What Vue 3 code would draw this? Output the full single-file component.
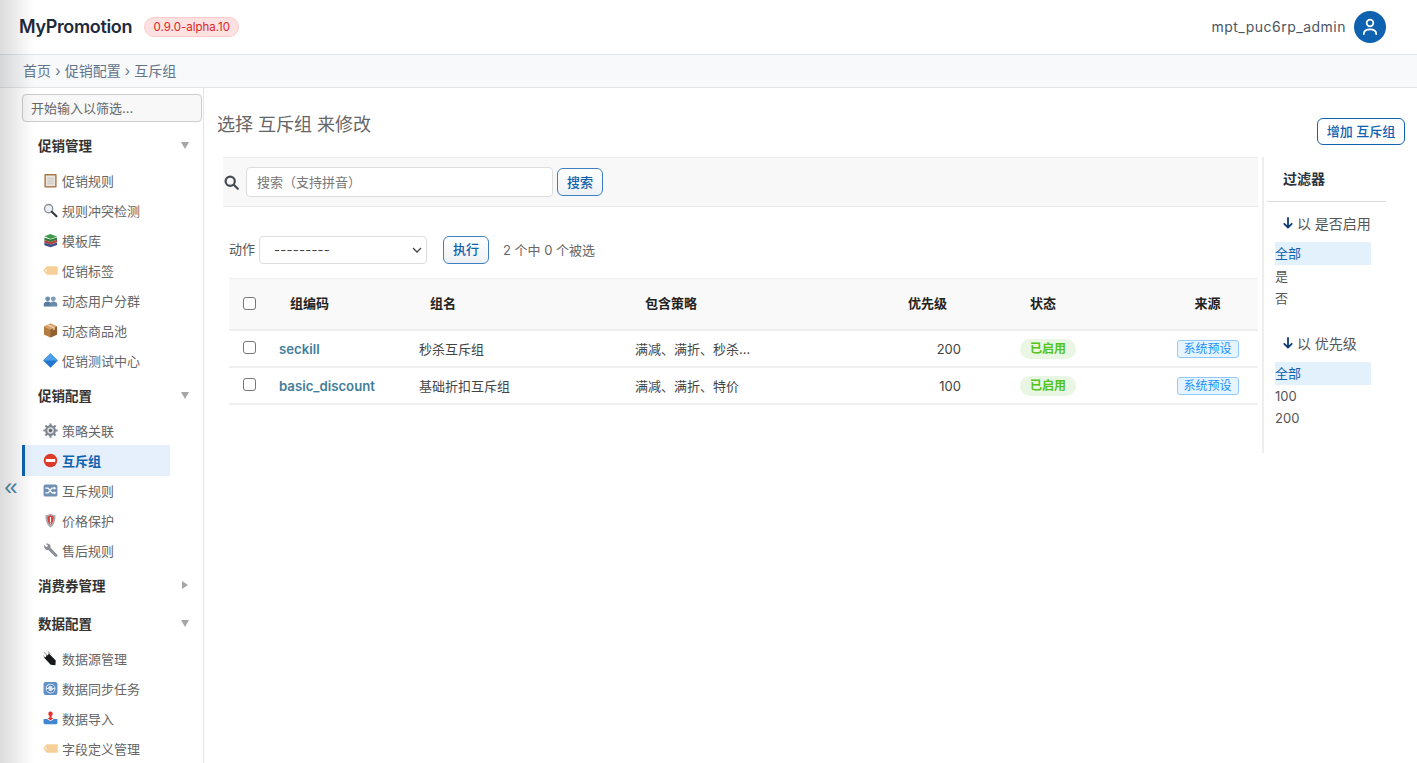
<script setup>
const icons = {
  clipboard: '<rect x="1.500" y="1" width="13" height="14.500" rx="1" fill="#a9743f"/><rect x="3" y="2.600" width="10" height="11.400" fill="#e9e6df"/><path d="M4.600 5.500h6.800M4.600 7.500h6.800M4.600 9.500h6.800M4.600 11.500h6.800" stroke="#bdb9b0" stroke-width=".7"/>',
  search: '<circle cx="6" cy="6" r="4.400" fill="#e8f0f6" stroke="#8b8f94" stroke-width="1.400"/><path d="M9.400 9.400l5 4.800" stroke="#33363a" stroke-width="2.200" stroke-linecap="round"/>',
  books: '<path d="M1.500 3.500L8 1l7 3-7 2.500z" fill="#3f9b4a"/><path d="M1.500 5L8 7l7-2.300V7.200L8 9.500 1.500 7.500z" fill="#2d7a3a"/><path d="M1.500 7.500l6.500 2 7-2.300v2.600L8 12.200 1.500 10z" fill="#b2413c"/><path d="M1.500 10.200L8 12.300l7-2.300v2.700L8 15.200l-6.500-2.200z" fill="#3f4f85"/>',
  tag: '<path d="M4 3.500h10.700a1 1 0 0 1 1 1v7a1 1 0 0 1-1 1H4L.3 8z" fill="#f6cf98"/><circle cx="3.400" cy="8" r="1" fill="#fff3e0"/>',
  users: '<circle cx="5" cy="6.200" r="2.600" fill="#6f8fb0"/><circle cx="11" cy="6.200" r="2.600" fill="#7f9cba"/><path d="M.8 14.500v-2.700C.8 10 3 9 5 9s3.600 1 3.600 2.800v2.700z" fill="#56799c"/><path d="M7.400 14.500v-2.700C7.400 10 9 9 11 9s4.200 1 4.200 2.800v2.700z" fill="#6a8aac"/>',
  box: '<path d="M8 .6l7 3.200v8.400L8 15.500 1 12.200V3.800z" fill="#b27c43"/><path d="M8 7.200L1 3.800 8 .6l7 3.200z" fill="#d6a56c"/><path d="M8 7.200v8.300l7-3.300V3.800z" fill="#8f5f2f"/><path d="M4.500 2.300L11 5.600v2.200l1.500-.7V4.900L6 1.600z" fill="#ecd4ae"/>',
  diamond: '<path d="M8 .2L15.800 8 8 15.800.2 8z" fill="#2276d2"/><path d="M8 .2L15.800 8H.2z" fill="#4f9fe8"/>',
  gear: '<circle cx="8" cy="8" r="5.800" fill="#7f8790"/><path d="M8 .4v15.200M.4 8h15.200M2.600 2.600l10.800 10.800M13.400 2.600L2.600 13.400" stroke="#7f8790" stroke-width="2.200"/><circle cx="8" cy="8" r="3.500" fill="#d6d9dd"/><circle cx="8" cy="8" r="1.800" fill="#5f666e"/>',
  noentry: '<circle cx="8" cy="8" r="7.200" fill="#dd3b2a"/><rect x="3" y="6.400" width="10" height="3.200" rx=".4" fill="#fff"/>',
  shuffle: '<rect x=".6" y="1.600" width="14.800" height="12.800" rx="2" fill="#6f8fb3"/><path d="M2.500 5.500h3l4 5H12M2.500 10.500h3l4-5H12" fill="none" stroke="#fff" stroke-width="1.300"/><path d="M11.500 3.700L14.300 5.500l-2.800 1.800zM11.500 8.700L14.300 10.500l-2.800 1.800z" fill="#fff"/>',
  shield: '<path d="M8 .6c1.500 1 3.800 1.700 5.400 1.700 0 5.200-1 10-5.400 13.300-4.400-3.300-5.400-8.100-5.400-13.300C4.200 2.300 6.500 1.600 8 .6z" fill="#a9adb3"/><path d="M8 2.400c1 .6 2.200 1 3.400 1.200 0 3.800-1 7-3.400 9.500-2.400-2.500-3.400-5.700-3.400-9.500C5.800 3.400 7 3 8 2.400z" fill="#d9453a"/><path d="M8 4.200v5.800M8 11v1" stroke="#fff" stroke-width="1.100"/>',
  wrench: '<path d="M1.400 2.200L3.800 4.600 5.400 3 3 .7c2.200-.8 4.600.4 5 2.500.1.600.1 1.200 0 1.800l7 7.200c.6.600.6 1.700 0 2.300-.6.600-1.700.6-2.300 0L5.800 7.400c-.6.100-1.200.1-1.800 0C1.900 7 .6 4.400 1.400 2.200z" fill="#8a8f95"/>',
  plug: '<path d="M1 1.200l3.500 3.500M5 .4L8 3.400M.4 5l3 3" stroke="#a8a8a8" stroke-width="1.100"/><path d="M6 2.400l7.600 7.800-.4 5-5-.6L1 6.800l2.200-.5.400-1.600 1.900-.5z" fill="#17181a"/>',
  sync: '<rect x=".6" y="1" width="14.800" height="14" rx="2.400" fill="#5f8fc4"/><circle cx="8" cy="8" r="5.200" fill="#dfe9f4"/><path d="M4.500 7.200A3.600 3.600 0 0 1 11 6.100M11.500 8.800A3.600 3.600 0 0 1 5 9.900" fill="none" stroke="#4177b3" stroke-width="1.300"/><path d="M12 4.400v2.800H9.300zM4 11.600V8.800h2.700z" fill="#4177b3"/>',
  inbox: '<circle cx="8" cy="3" r="2.400" fill="#e5322d"/><path d="M6.800 4.500h2.400v3h2L8 10.200 4.800 7.500h2z" fill="#e5322d"/><path d="M.6 8.500h3.900L8 11l3.500-2.500h3.900V12.500a1.500 1.500 0 0 1-1.500 1.500H2.100a1.500 1.500 0 0 1-1.500-1.500z" fill="#3f87d2"/>'
}
const groups = [
  { title: '促销管理', open: true, items: [['clipboard', '促销规则'], ['search', '规则冲突检测'], ['books', '模板库'], ['tag', '促销标签'], ['users', '动态用户分群'], ['box', '动态商品池'], ['diamond', '促销测试中心']] },
  { title: '促销配置', open: true, items: [['gear', '策略关联'], ['noentry', '互斥组', true], ['shuffle', '互斥规则'], ['shield', '价格保护'], ['wrench', '售后规则']] },
  { title: '消费券管理', open: false, items: [] },
  { title: '数据配置', open: true, items: [['plug', '数据源管理'], ['sync', '数据同步任务'], ['inbox', '数据导入'], ['tag', '字段定义管理']] }
]
const rows = [
  { code: 'seckill', name: '秒杀互斥组', strategy: '满减、满折、秒杀...', priority: 200 },
  { code: 'basic_discount', name: '基础折扣互斥组', strategy: '满减、满折、特价', priority: 100 }
]
const filters = [
  { title: '以 是否启用', options: ['全部', '是', '否'] },
  { title: '以 优先级', options: ['全部', '100', '200'] }
]
</script>

<template>
  <div class="page">
    <header class="topbar">
      <div class="brand">
        <span class="logo">MyPromotion</span>
        <span class="version">0.9.0-alpha.10</span>
      </div>
      <div class="user">
        <span class="username">mpt_puc6rp_admin</span>
        <span class="avatar">
          <svg width="20" height="20" viewBox="0 0 20 20" fill="none" stroke="#fff" stroke-width="1.800" stroke-linecap="round">
            <circle cx="10" cy="6" r="3.300" />
            <path d="M3.800 17c0-3 2.400-4.600 6.200-4.600s6.200 1.600 6.200 4.600" />
          </svg>
        </span>
      </div>
    </header>
    <nav class="crumbs">首页 › 促销配置 › 互斥组</nav>

    <div class="main">
      <aside class="sidebar">
        <input class="nav-filter" placeholder="开始输入以筛选..." />
        <section v-for="g in groups" :key="g.title" class="group">
          <div class="group-head">
            <span>{{ g.title }}</span>
            <i :class="g.open ? 'caret-down' : 'caret-right'"></i>
          </div>
          <ul v-if="g.items.length" class="items">
            <li v-for="it in g.items" :key="it[1]" :class="{ active: it[2] }">
              <svg class="emoji" viewBox="0 0 16 16" v-html="icons[it[0]]"></svg>
              <span>{{ it[1] }}</span>
            </li>
          </ul>
        </section>
      </aside>

      <main class="content">
        <div class="title-row">
          <h1>选择 互斥组 来修改</h1>
          <button class="btn add">增加 互斥组</button>
        </div>
        <div class="body-row">
          <div class="changelist">
            <div class="searchbar">
              <svg class="search-icon" width="15" height="15" viewBox="0 0 15 15" fill="none" stroke="#444b52" stroke-width="2.200">
                <circle cx="6.200" cy="6.200" r="4.600" />
                <path d="M9.800 9.800l4 4" stroke-linecap="round" />
              </svg>
              <input class="search-input" placeholder="搜索（支持拼音）" />
              <button class="btn small">搜索</button>
            </div>
            <div class="actions">
              <span class="act-label">动作</span>
              <select class="act-select"><option>---------</option></select>
              <button class="btn small exec">执行</button>
              <span class="counter">2 个中 0 个被选</span>
            </div>
            <table class="grid">
              <thead>
                <tr>
                  <th class="c-check"><input type="checkbox" class="cb" /></th>
                  <th class="c-code">组编码</th>
                  <th class="c-name">组名</th>
                  <th class="c-strategy">包含策略</th>
                  <th class="c-priority">优先级</th>
                  <th class="c-status">状态</th>
                  <th class="c-source">来源</th>
                </tr>
              </thead>
              <tbody>
                <tr v-for="r in rows" :key="r.code">
                  <td class="c-check"><input type="checkbox" class="cb" /></td>
                  <td class="c-code"><a class="link">{{ r.code }}</a></td>
                  <td class="c-name">{{ r.name }}</td>
                  <td class="c-strategy">{{ r.strategy }}</td>
                  <td class="c-priority">{{ r.priority }}</td>
                  <td class="c-status"><span class="pill">已启用</span></td>
                  <td class="c-source"><span class="tag">系统预设</span></td>
                </tr>
              </tbody>
            </table>
          </div>
          <aside class="filter">
            <h2>过滤器</h2>
            <section v-for="f in filters" :key="f.title" class="filter-sec">
              <h3>
                <svg width="10" height="12" viewBox="0 0 10 12" fill="none" stroke="#0f3d73" stroke-width="1.800" stroke-linecap="round" stroke-linejoin="round">
                  <path d="M5 1v9.500M1.300 6.800L5 10.500l3.700-3.700" />
                </svg>
                {{ f.title }}
              </h3>
              <ul>
                <li v-for="(o, i) in f.options" :key="o" :class="{ sel: i === 0 }">{{ o }}</li>
              </ul>
            </section>
          </aside>
        </div>
      </main>
    </div>

    <div class="edge-shade"></div>
    <button class="collapse">«</button>
  </div>
</template>

<style>
html, body { margin: 0; background: #fff; }
</style>

<style scoped>
* { box-sizing: border-box; }
.page {
  position: relative;
  height: 763px;
  overflow: hidden;
  background: #fff;
  font-family: Inter, "Noto Sans CJK SC", sans-serif;
  font-size: 13px;
  color: #444;
}
.topbar {
  height: 55px;
  border-bottom: 1px solid #e2e5e9;
  display: flex;
  align-items: center;
  justify-content: space-between;
  padding: 0 31px 1px 19px;
}
.brand { display: flex; align-items: center; gap: 12px; }
.logo { font-size: 18px; font-weight: 600; color: #1e293b; letter-spacing: -0.35px; }
.version {
  height: 20px;
  line-height: 18px;
  padding: 0 8.500px;
  font-size: 11.500px;
  color: #dc2626;
  background: #fee2e2;
  border: 1px solid #fecaca;
  border-radius: 10px;
}
.user { display: flex; align-items: center; gap: 8px; }
.username { font-size: 14px; color: #4b5563; letter-spacing: .5px; }
.avatar {
  width: 32px;
  height: 32px;
  border-radius: 50%;
  background: #0f62b0;
  display: flex;
  align-items: center;
  justify-content: center;
}
.crumbs {
  height: 33px;
  line-height: 32px;
  padding-left: 23px;
  font-size: 14px;
  word-spacing: .2px;
  color: #64748b;
  background: #f8f9fb;
  border-bottom: 1px solid #e2e5e9;
}
.main { display: flex; height: 675px; }
.sidebar {
  width: 203.500px;
  flex: none;
  border-right: 1px solid #e4e6e8;
  padding: 6px 0 0 22px;
  overflow: hidden;
}
.nav-filter {
  display: block;
  width: 180px;
  height: 28px;
  padding: 0 8px;
  font: inherit;
  color: #666;
  background: #f8f8f8;
  border: 1px solid #ccc;
  border-radius: 4px;
}
.nav-filter::placeholder { color: #666; }
.group { width: 180px; }
.group-head {
  display: flex;
  align-items: center;
  justify-content: space-between;
  height: 38px;
  padding: 0 13px 0 16px;
  font-size: 13.500px;
  font-weight: 600;
  color: #333;
}
.nav-filter + .group .group-head { margin-top: 4px; }
.caret-down { border-left: 4px solid transparent; border-right: 4px solid transparent; border-top: 7px solid #a6a6a6; }
.caret-right { border-top: 4px solid transparent; border-bottom: 4px solid transparent; border-left: 6px solid #a6a6a6; margin-right: 1px; }
.items { list-style: none; margin: 0; padding: 0 0 2px; width: 148px; }
.items li {
  height: 30px;
  display: flex;
  align-items: center;
  gap: 4px;
  padding: 2px 0 0 21px;
  color: #666;
}
.items li.active {
  height: 31px;
  margin: 1px 0 -2px;
  padding: 0 0 1px 18px;
  background: #e6f0fc;
  border-left: 3px solid #0f62b0;
  color: #0f62b0;
  font-weight: 600;
}
.emoji { width: 15px; height: 15px; flex: none; }
.content { flex: 1; min-width: 0; padding-left: 13.500px; }
.title-row {
  display: flex;
  justify-content: space-between;
  height: 69px;
  padding: 23px 12px 0 0;
}
h1 { margin: 0; font-size: 18px; font-weight: 400; line-height: 28px; color: #666; }
.btn {
  font: inherit;
  font-weight: 500;
  color: #0f62b0;
  background: linear-gradient(#fff, #eef1f4);
  border: 1px solid #3d7fc0;
  border-radius: 6px;
  cursor: pointer;
  padding: 0 0 2px;
}
.add { width: 88px; height: 27px; margin-top: 7px; background: #fff; border-color: #0f62b0; }
.small { width: 46px; height: 28px; }
.body-row { display: flex; gap: 4px; padding-left: 6px; }
.changelist { width: 1035px; flex: none; }
.searchbar {
  height: 50px;
  background: #f8f8f8;
  border-top: 1px solid #eee;
  border-bottom: 1px solid #e8e8e8;
  display: flex;
  align-items: center;
}
.search-icon { margin-left: 1px; flex: none; }
.search-input {
  width: 307px;
  height: 30px;
  margin: 0 4px 0 7px;
  padding: 0 10px;
  font: inherit;
  background: #fff;
  border: 1px solid #ddd;
  border-radius: 4px;
}
.search-input::placeholder { color: #777; }
.actions {
  display: flex;
  align-items: center;
  height: 72px;
  margin-left: 6px;
  padding-top: 14px;
  border-bottom: 1px solid #eee;
}
.act-label { width: 30px; color: #555; margin-top: -3px; }
.act-select {
  appearance: none;
  width: 168px;
  height: 28px;
  padding: 0 0 0 14px;
  font: inherit;
  letter-spacing: .25px;
  color: #444;
  border: 1px solid #ddd;
  border-radius: 4px;
  background: #fff url("data:image/svg+xml,%3Csvg xmlns='http://www.w3.org/2000/svg' width='10' height='6'%3E%3Cpath d='M1 1l4 4 4-4' fill='none' stroke='%23444' stroke-width='1.300'/%3E%3C/svg%3E") no-repeat right 4px center;
}
.exec { margin-left: 16px; }
.counter { margin-left: 14px; color: #666; }
.grid {
  width: 1029px;
  margin-left: 6px;
  table-layout: fixed;
  border-collapse: collapse;
}
.grid th {
  height: 51px;
  background: #f9f9f9;
  color: #222;
  font-weight: 600;
  text-align: left;
  border-bottom: 2px solid #eee;
  padding: 0 0 4px;
}
.grid td {
  height: 37px;
  border-bottom: 2px solid #f0f0f0;
  padding: 0;
  color: #444;
}
.c-check { width: 40px; padding-left: 14px !important; }
th.c-check { padding-bottom: 0; }
.cb {
  appearance: none;
  display: block;
  width: 13px;
  height: 13px;
  margin: -3px 0 0;
  background: #fff;
  border: 1px solid #777;
  border-radius: 3px;
}
th .cb { margin-top: -2px; }
.c-code { width: 140px; padding-left: 10px !important; }
th.c-code { padding-left: 21px !important; }
.c-name { width: 216px; padding-left: 10px !important; }
td.c-name, td.c-strategy { padding-bottom: 1px; }
th.c-name { padding-left: 21px !important; }
.c-strategy { width: 216px; padding-left: 10px !important; }
th.c-strategy { padding-left: 20px !important; }
.c-priority { width: 130px; text-align: right !important; padding-right: 10px !important; }
th.c-priority { padding-right: 24px !important; }
.c-status { width: 186px; padding-left: 49px !important; }
th.c-status { padding-left: 59px !important; }
.c-source { width: 101px; text-align: center !important; }
.link { color: #447e9b; font-weight: 600; font-size: 13.200px; }
.pill {
  display: inline-block;
  width: 56px;
  height: 20px;
  line-height: 20px;
  text-align: center;
  font-size: 12px;
  font-weight: 600;
  color: #52c41a;
  background: #e9f6e3;
  border-radius: 10px;
}
.tag {
  display: inline-block;
  width: 62px;
  height: 18px;
  line-height: 16px;
  text-align: center;
  font-size: 12px;
  color: #1890ff;
  background: #e6f4ff;
  border: 1px solid #91caff;
  border-radius: 3px;
}
.filter {
  width: 123px;
  height: 296px;
  flex: none;
  margin-left: 0;
  border-left: 2px solid #eee;
  padding-left: 3px;
}
h2 {
  margin: 0;
  height: 45px;
  line-height: 44px;
  width: 119px;
  padding-left: 16px;
  font-size: 14px;
  font-weight: 600;
  color: #2b3440;
  border-bottom: 1px solid #ddd;
}
.filter-sec { margin-bottom: 12.500px; }
.filter-sec h3 {
  margin: 0;
  height: 40px;
  line-height: 43px;
  padding-left: 16px;
  font-size: 14px;
  font-weight: 400;
  color: #555;
  white-space: nowrap;
}
.filter-sec ul { list-style: none; margin: 0; padding: 0 0 0 8px; width: 104px; }
.filter-sec li { height: 22.500px; line-height: 22px; color: #555; }
.filter-sec li.sel { background: #e3f1fd; color: #0f62b0; }
.edge-shade {
  position: absolute;
  left: 0;
  top: 0;
  bottom: 0;
  width: 34px;
  background: linear-gradient(90deg, rgba(0,0,0,.14), rgba(0,0,0,0));
  pointer-events: none;
}
.collapse {
  position: absolute;
  left: 4px;
  top: 475px;
  width: 14px;
  height: 24px;
  padding: 0;
  font: 400 24px/22px "Liberation Sans", sans-serif;
  color: #447e9b;
  background: none;
  border: 0;
}
</style>
